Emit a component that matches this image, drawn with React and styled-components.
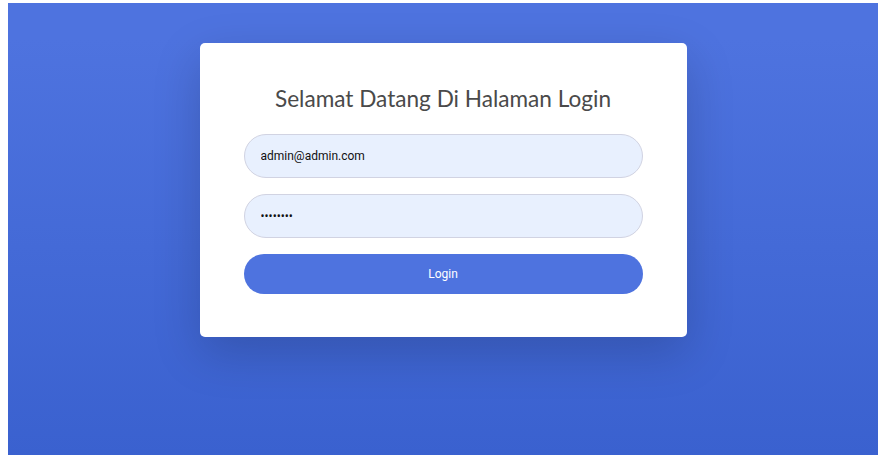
import React, { Component } from 'react';
import styled, { createGlobalStyle } from 'styled-components';

const GlobalStyle = createGlobalStyle`
    html, body {
        margin: 0;
        padding: 0;
        background: #ffffff;
    }
    body {
        padding: 3px 0 0 8px;
        font-family: 'Lato', 'Open Sans', sans-serif;
    }
`

const Page = styled.div`
    height: 452px;
    background: linear-gradient(180deg, #4e73df 8%, #3a61cf 100%);
    display: flex;
    justify-content: center;
    align-items: flex-start;
    padding-top: 40px;
    box-sizing: border-box;
`

const Card = styled.div`
    width: 487px;
    height: 294px;
    box-sizing: border-box;
    background: #ffffff;
    border-radius: 5px;
    box-shadow: 0 1rem 3rem rgba(0, 0, 0, 0.175);
    padding: 41px 44px 0;
`

const Title = styled.h1`
    margin: 0 0 20px;
    font-family: 'Lato', 'Open Sans', sans-serif;
    font-weight: 400;
    font-size: 22.6px;
    line-height: 30px;
    color: #4a4a4a;
    text-align: center;
`

const Form = styled.form`
    display: flex;
    flex-direction: column;
    gap: 16px;
`

const Input = styled.input`
    height: 44px;
    box-sizing: border-box;
    border: 1px solid #d1d3e2;
    border-radius: 22px;
    background: #e8f0fe;
    padding: 0 16px;
    font-family: 'Roboto', 'Liberation Sans', sans-serif;
    font-size: 12px;
    color: #111111;
    outline: none;
`

const Button = styled.button`
    height: 40px;
    border: none;
    border-radius: 20px;
    background: #4e73df;
    color: #ffffff;
    font-family: 'Roboto', 'Liberation Sans', sans-serif;
    font-size: 12px;
    cursor: pointer;
`

class App extends Component {
    constructor(props) {
        super(props);
        this.state = {
            email: 'admin@admin.com',
            password: 'password'
        }
    }

    changeHandler = (event) => {
        this.setState({ [event.target.name]: event.target.value });
    }

    render() {
        return (
            <>
                <GlobalStyle />
                <Page>
                    <Card>
                        <Title>Selamat Datang Di Halaman Login</Title>
                        <Form onSubmit={(e) => e.preventDefault()}>
                            <Input
                                name="email"
                                type="email"
                                value={this.state.email}
                                onChange={this.changeHandler}
                            />
                            <Input
                                name="password"
                                type="password"
                                value={this.state.password}
                                onChange={this.changeHandler}
                            />
                            <Button type="submit">Login</Button>
                        </Form>
                    </Card>
                </Page>
            </>
        );
    }
}

export default App;
